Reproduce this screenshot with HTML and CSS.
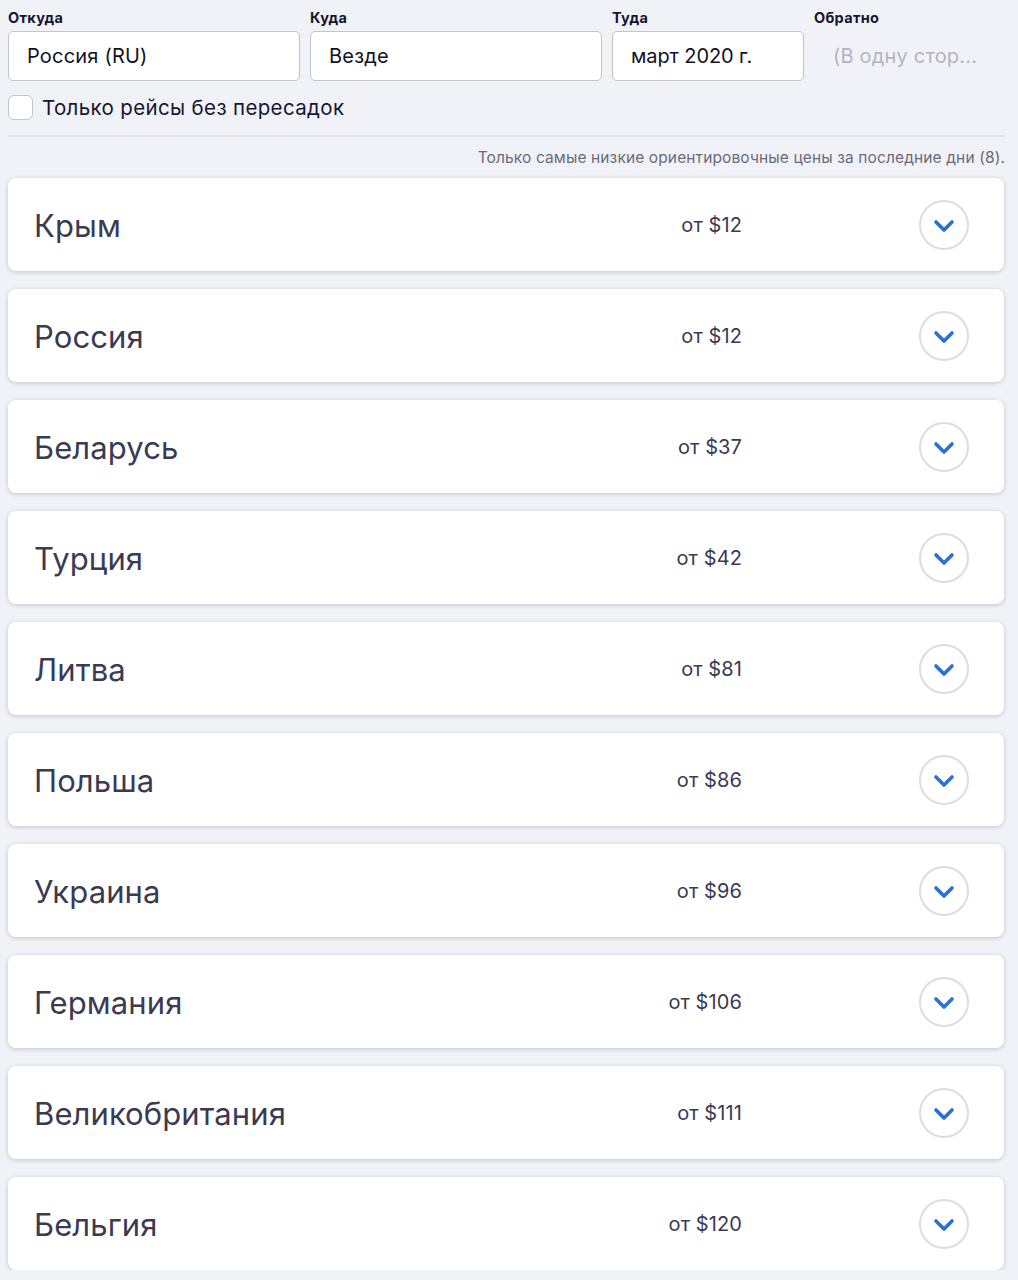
FILE: index.html
```html
<!DOCTYPE html>
<html lang="ru">
<head>
<meta charset="utf-8">
<link rel="stylesheet" href="styles.css">
</head>
<body>
<div class="page">
  <div class="form">
    <div class="field f-from">
      <div class="label">Откуда</div>
      <div class="input">Россия (RU)</div>
    </div>
    <div class="field f-to">
      <div class="label">Куда</div>
      <div class="input">Везде</div>
    </div>
    <div class="field f-date">
      <div class="label">Туда</div>
      <div class="input">март 2020 г.</div>
    </div>
    <div class="field f-back">
      <div class="label">Обратно</div>
      <div class="input ghost">(В одну стор...</div>
    </div>
  </div>
  <label class="check"><span class="box"></span><span>Только рейсы без пересадок</span></label>
  <div class="divider"></div>
  <div class="note">Только самые низкие ориентировочные цены за последние дни (8).</div>
  <div class="list">
    <div class="card"><div class="name">Крым</div><div class="price">от $12</div><div class="chev"><svg viewBox="0 0 22 14" width="22" height="14"><path d="M3 3 L11 11 L19 3" fill="none" stroke="#2b6fd8" stroke-width="3.6" stroke-linecap="round" stroke-linejoin="round"/></svg></div></div>
    <div class="card"><div class="name">Россия</div><div class="price">от $12</div><div class="chev"><svg viewBox="0 0 22 14" width="22" height="14"><path d="M3 3 L11 11 L19 3" fill="none" stroke="#2b6fd8" stroke-width="3.6" stroke-linecap="round" stroke-linejoin="round"/></svg></div></div>
    <div class="card"><div class="name">Беларусь</div><div class="price">от $37</div><div class="chev"><svg viewBox="0 0 22 14" width="22" height="14"><path d="M3 3 L11 11 L19 3" fill="none" stroke="#2b6fd8" stroke-width="3.6" stroke-linecap="round" stroke-linejoin="round"/></svg></div></div>
    <div class="card"><div class="name">Турция</div><div class="price">от $42</div><div class="chev"><svg viewBox="0 0 22 14" width="22" height="14"><path d="M3 3 L11 11 L19 3" fill="none" stroke="#2b6fd8" stroke-width="3.6" stroke-linecap="round" stroke-linejoin="round"/></svg></div></div>
    <div class="card"><div class="name">Литва</div><div class="price">от $81</div><div class="chev"><svg viewBox="0 0 22 14" width="22" height="14"><path d="M3 3 L11 11 L19 3" fill="none" stroke="#2b6fd8" stroke-width="3.6" stroke-linecap="round" stroke-linejoin="round"/></svg></div></div>
    <div class="card"><div class="name">Польша</div><div class="price">от $86</div><div class="chev"><svg viewBox="0 0 22 14" width="22" height="14"><path d="M3 3 L11 11 L19 3" fill="none" stroke="#2b6fd8" stroke-width="3.6" stroke-linecap="round" stroke-linejoin="round"/></svg></div></div>
    <div class="card"><div class="name">Украина</div><div class="price">от $96</div><div class="chev"><svg viewBox="0 0 22 14" width="22" height="14"><path d="M3 3 L11 11 L19 3" fill="none" stroke="#2b6fd8" stroke-width="3.6" stroke-linecap="round" stroke-linejoin="round"/></svg></div></div>
    <div class="card"><div class="name">Германия</div><div class="price">от $106</div><div class="chev"><svg viewBox="0 0 22 14" width="22" height="14"><path d="M3 3 L11 11 L19 3" fill="none" stroke="#2b6fd8" stroke-width="3.6" stroke-linecap="round" stroke-linejoin="round"/></svg></div></div>
    <div class="card"><div class="name">Великобритания</div><div class="price">от $111</div><div class="chev"><svg viewBox="0 0 22 14" width="22" height="14"><path d="M3 3 L11 11 L19 3" fill="none" stroke="#2b6fd8" stroke-width="3.6" stroke-linecap="round" stroke-linejoin="round"/></svg></div></div>
    <div class="card"><div class="name">Бельгия</div><div class="price">от $120</div><div class="chev"><svg viewBox="0 0 22 14" width="22" height="14"><path d="M3 3 L11 11 L19 3" fill="none" stroke="#2b6fd8" stroke-width="3.6" stroke-linecap="round" stroke-linejoin="round"/></svg></div></div>
  </div>
</div>
</body>
</html>
```
FILE: styles.css
```css
html, body {
  margin: 0;
  padding: 0;
  background: #f1f2f7;
}
body {
  font-family: Inter, "Noto Sans", "Liberation Sans", sans-serif;
  color: #161630;
}
.page {
  padding: 8px 14px 0 8px;
}
.form {
  display: flex;
  gap: 10px;
}
.f-from, .f-to { width: 292px; }
.f-date { width: 192px; }
.f-back { flex: 1; }
.label {
  font-size: 14.5px;
  font-weight: 700;
  line-height: 20px;
  margin-bottom: 3px;
  letter-spacing: 0.3px;
}
.input {
  box-sizing: border-box;
  height: 50px;
  border: 1px solid #c3c4cc;
  border-radius: 5px;
  background: #fff;
  font-size: 20px;
  line-height: 48px;
  padding-left: 18px;
  color: #111122;
  letter-spacing: 0.2px;
}
.f-date .input { letter-spacing: -0.1px; }
.input.ghost {
  border-color: transparent;
  background: transparent;
  color: #b4b5c0;
}
.check {
  display: flex;
  align-items: center;
  gap: 9px;
  margin-top: 14px;
  height: 25px;
  font-size: 20.5px;
  color: #161630;
  letter-spacing: 0.35px;
}
.box {
  box-sizing: border-box;
  width: 25px;
  height: 25px;
  border: 1px solid #c3c4cc;
  border-radius: 6px;
  background: #fff;
}
.divider {
  margin-top: 15px;
  height: 2px;
  background: #e2e3ea;
  margin-right: -1px;
}
.note {
  margin-top: 11px;
  text-align: right;
  font-size: 15.5px;
  line-height: 20px;
  color: #6a6b7a;
  letter-spacing: 0.12px;
  margin-right: -1px;
}
.list {
  margin-top: 10px;
  display: flex;
  flex-direction: column;
  gap: 18px;
}
.card {
  display: flex;
  align-items: center;
  height: 93px;
  background: #fff;
  border-radius: 8px;
  box-shadow: 0 1px 4px rgba(30, 30, 60, 0.22);
  padding: 0 35px 0 26px;
}
.name {
  flex: 1;
  font-size: 31px;
  color: #3a3a52;
  letter-spacing: 0.1px;
  padding-top: 2px;
}
.price {
  font-size: 20px;
  color: #3a3a52;
  margin-right: 177px;
  letter-spacing: 0.1px;
}
.chev {
  box-sizing: border-box;
  width: 50px;
  height: 50px;
  border: 2px solid #dcdde3;
  border-radius: 50%;
  display: flex;
  align-items: center;
  justify-content: center;
  padding-top: 2px;
}
```
